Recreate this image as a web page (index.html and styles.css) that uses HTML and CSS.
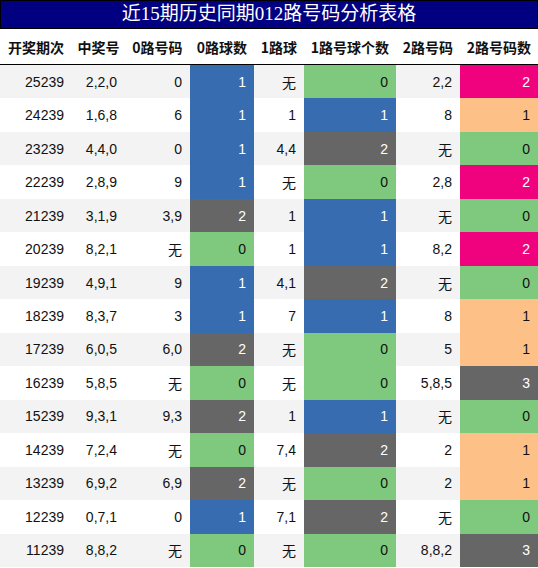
FILE: index.html
```html
<!DOCTYPE html>
<html lang="zh">
  <head>
    <meta charset="UTF-8" />
    <meta name="viewport" content="width=device-width, initial-scale=1.0" />
    <title>近15期历史同期012路号码分析表格</title>
    <link rel="stylesheet" href="styles.css">
  </head>
  <body>
    <div class="title">近15期历史同期012路号码分析表格</div>
    <table class="grid">
      <colgroup>
        <col class="c1"><col class="c2"><col class="c3"><col class="c4">
        <col class="c5"><col class="c6"><col class="c7"><col class="c8">
      </colgroup>
      <thead>
        <tr>
          <th>开奖期次</th>
          <th>中奖号</th>
          <th>0路号码</th>
          <th>0路球数</th>
          <th>1路球</th>
          <th>1路号球个数</th>
          <th>2路号码</th>
          <th>2路号码数</th>
        </tr>
      </thead>
      <tbody id="rows"></tbody>
    </table>

    <script>
      // issue, numbers, 0-road, 0 count, 1-road, 1 count, 2-road, 2 count
      const data = [
        ["25239", "2,2,0", "0", 1, "无", 0, "2,2", 2],
        ["24239", "1,6,8", "6", 1, "1", 1, "8", 1],
        ["23239", "4,4,0", "0", 1, "4,4", 2, "无", 0],
        ["22239", "2,8,9", "9", 1, "无", 0, "2,8", 2],
        ["21239", "3,1,9", "3,9", 2, "1", 1, "无", 0],
        ["20239", "8,2,1", "无", 0, "1", 1, "8,2", 2],
        ["19239", "4,9,1", "9", 1, "4,1", 2, "无", 0],
        ["18239", "8,3,7", "3", 1, "7", 1, "8", 1],
        ["17239", "6,0,5", "6,0", 2, "无", 0, "5", 1],
        ["16239", "5,8,5", "无", 0, "无", 0, "5,8,5", 3],
        ["15239", "9,3,1", "9,3", 2, "1", 1, "无", 0],
        ["14239", "7,2,4", "无", 0, "7,4", 2, "2", 1],
        ["13239", "6,9,2", "6,9", 2, "无", 0, "2", 1],
        ["12239", "0,7,1", "0", 1, "7,1", 2, "无", 0],
        ["11239", "8,8,2", "无", 0, "无", 0, "8,8,2", 3]
      ];

      // colour scales for the count columns
      const countColors = ["green", "blue", "grey"];
      const twoColors = ["green", "orange", "pink", "grey"];

      const tbody = document.getElementById("rows");
      data.forEach(function (row) {
        const tr = document.createElement("tr");
        row.forEach(function (value, i) {
          const td = document.createElement("td");
          td.innerText = value;
          if (i === 3 || i === 5) td.className = countColors[value];
          if (i === 7) td.className = twoColors[value];
          tr.appendChild(td);
        });
        tbody.appendChild(tr);
      });
    </script>
  </body>
</html>
```

FILE: styles.css
```css
body {
  margin: 0;
  padding: 0;
  width: 538px;
  background-color: #fff;
  font-family: "Liberation Sans", Arial, "Noto Sans CJK SC", sans-serif;
  font-size: 14px;
  color: #111;
}

.title {
  box-sizing: border-box;
  height: 29px;
  border: 1px solid #000;
  background-color: #000080;
  color: #fff;
  font-family: "Liberation Serif", "Noto Sans CJK SC", serif;
  font-size: 19px;
  line-height: 26px;
  text-align: center;
}

.grid {
  width: 538px;
  border-collapse: collapse;
  table-layout: fixed;
}

.c1 { width: 72px; }
.c2 { width: 53px; }
.c3 { width: 65px; }
.c4 { width: 64px; }
.c5 { width: 50px; }
.c6 { width: 92px; }
.c7 { width: 64px; }
.c8 { width: 78px; }

th {
  height: 35px;
  padding: 0;
  font-family: "Noto Sans CJK SC", sans-serif;
  font-size: 14px;
  font-weight: bold;
  color: #111;
  text-align: center;
  border-bottom: 1px solid #000;
  white-space: nowrap;
}

td {
  height: 33.47px;
  padding: 0 8px 0 0;
  text-align: right;
  vertical-align: middle;
  white-space: nowrap;
}

tbody tr:nth-child(odd) {
  background-color: #f3f3f3;
}

tbody tr:nth-child(even) {
  background-color: #fff;
}

.green {
  background-color: #7fc97f;
  color: #111;
}

.blue {
  background-color: #386cb0;
  color: #fff;
}

.grey {
  background-color: #666666;
  color: #fff;
}

.orange {
  background-color: #fdc086;
  color: #111;
}

.pink {
  background-color: #f0027f;
  color: #fff;
}
```
